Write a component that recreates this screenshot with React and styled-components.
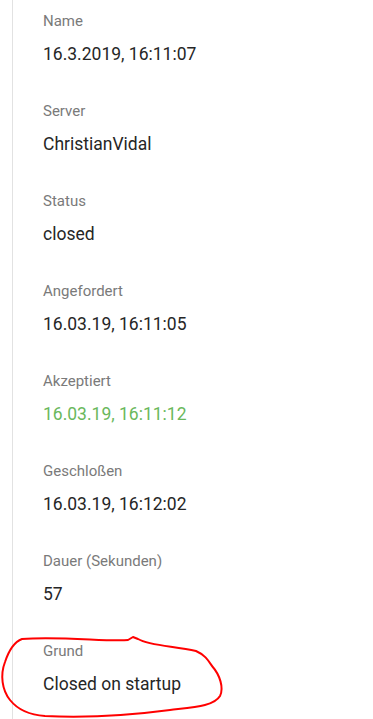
import styled, { createGlobalStyle } from "styled-components";

const GlobalStyle = createGlobalStyle`
  html, body {
    margin: 0;
    padding: 0;
    background: #fff;
  }
  body {
    font-family: Roboto, "Noto Sans", sans-serif;
    overflow: hidden;
  }
`;

const details = [
  { label: "Name", value: "16.3.2019, 16:11:07" },
  { label: "Server", value: "ChristianVidal" },
  { label: "Status", value: "closed" },
  { label: "Angefordert", value: "16.03.19, 16:11:05" },
  { label: "Akzeptiert", value: "16.03.19, 16:11:12", accepted: true },
  { label: "Geschloßen", value: "16.03.19, 16:12:02" },
  { label: "Dauer (Sekunden)", value: "57" },
  { label: "Grund", value: "Closed on startup", marked: true },
];

const Page = styled.div`
  margin-left: 12px;
  min-height: 100vh;
  border-left: 1px solid #e2e2e2;
  padding-left: 30px;
  box-sizing: border-box;
`;

const List = styled.dl`
  margin: 0;
  display: flex;
  flex-direction: column;
`;

const Item = styled.div`
  position: relative;
  padding: 11px 0 24px;
  display: flex;
  flex-direction: column;
  gap: 11px;
`;

const Label = styled.dt`
  font-size: 15px;
  line-height: 20px;
  color: #7a7a7a;
`;

const Value = styled.dd`
  margin: 0;
  font-size: 17.5px;
  line-height: 24px;
  color: ${(p) => (p.$accepted ? "#6ab85c" : "#262626")};
`;

const Scribble = styled.svg`
  position: absolute;
  left: -43px;
  top: 0;
  width: 240px;
  height: 90px;
  pointer-events: none;
  overflow: visible;
`;

// hand-drawn marker around the last entry (coords relative to the item)
const RedCircle = () => (
  <Scribble viewBox="0 0 240 90">
    <path
      d="M22 9 C60 6, 110 12, 128 10 L133 7 L138 9 C150 16, 175 16, 196 21
         C205 25, 208 30, 212 36 C220 45, 224 58, 220 66 C214 76, 195 77, 170 80
         C140 84, 90 88, 45 86 C30 85, 18 80, 10 70 C2 60, 0 45, 5 32
         C9 20, 14 12, 22 9 Z"
      fill="none"
      stroke="#f00"
      strokeWidth="2"
      strokeLinejoin="round"
    />
  </Scribble>
);

export default function App() {
  return (
    <>
      <GlobalStyle />
      <Page>
        <List>
          {details.map((d) => (
            <Item key={d.label}>
              <Label>{d.label}</Label>
              <Value $accepted={d.accepted}>{d.value}</Value>
              {d.marked && <RedCircle />}
            </Item>
          ))}
        </List>
      </Page>
    </>
  );
}
